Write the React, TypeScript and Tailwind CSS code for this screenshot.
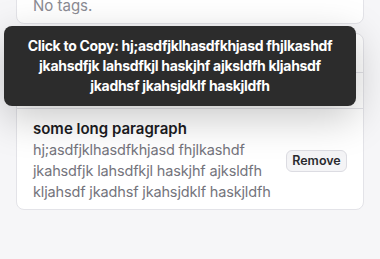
import { useState } from 'react';

// Tag / paragraph list with a copy tooltip open over it
export default function App() {
  const [copied, setCopied] = useState(false);
  const text = 'hj;asdfjklhasdfkhjasd fhjlkashdf jkahsdfjk lahsdfkjl haskjhf ajksldfh kljahsdf jkadhsf jkahsjdklf haskjldfh';

  return (
    <div className="relative h-[259px] overflow-hidden bg-[#f6f6f8] px-4 font-['Inter',sans-serif]">
      {/* tags card, scrolled mostly out of view */}
      <div className="-mt-[20px] rounded-b-lg border border-[#e3e3e8] bg-white px-4 pt-[14px] pb-[7px]">
        <p className="text-[15px] leading-[21px] text-[#8b8b93]">No tags.</p>
      </div>

      <div className="mt-[9px] overflow-hidden rounded-lg border border-[#e3e3e8] bg-white">
        <div className="h-[39px] border-b border-[#e3e3e8]" />
        <div className="h-[36px] border-b border-[#e3e3e8]" />
        <div className="flex items-center gap-2 px-4 pt-[9px] pb-[7px]">
          <div className="min-w-0 flex-1">
            <p className="text-[15px] font-semibold leading-[21px] text-[#1c1c1f]">some long paragraph</p>
            <p className="text-[14.5px] leading-[21px] tracking-[-0.15px] text-[#74747c]">{text}</p>
          </div>
          <button
            onClick={() => setCopied(!copied)}
            className="mt-[2px] h-[22px] w-[61px] shrink-0 rounded-md border border-[#dcdce2] bg-[#f4f4f6] text-[12.5px] font-semibold leading-none text-[#2a2a2e]"
          >
            Remove
          </button>
        </div>
      </div>

      {/* tooltip */}
      <div className="absolute top-[26px] left-1 w-[352px] rounded-lg bg-[#2c2c2c] px-3 py-[10px] text-center text-[14px] font-bold leading-[20px] tracking-[-0.3px] text-white shadow-[0_12px_40px_rgba(0,0,0,0.22)]">
        Click to Copy: {text}
      </div>
    </div>
  );
}
